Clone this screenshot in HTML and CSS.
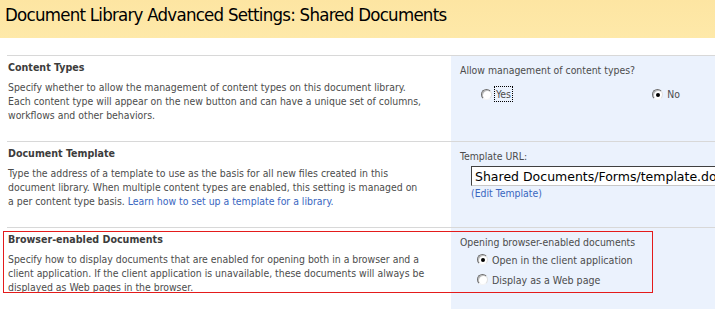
FILE: index.html
```html
<!DOCTYPE html>
<html lang="en">
<head>
    <meta charset="UTF-8">
    <title>Document Library Advanced Settings: Shared Documents</title>
    <link rel="stylesheet" href="styles.css">
</head>
<body>
    <div class="page-title">
        <h1>Document Library Advanced Settings: Shared Documents</h1>
    </div>
    <div class="settings">
        <div class="row">
            <div class="desc">
                <h3>Content Types</h3>
                <p>Specify whether to allow the management of content types on this document library. Each content type will appear on the new button and can have a unique set of columns, workflows and other behaviors.</p>
            </div>
            <div class="ctrl">
                <div class="ctrl-label">Allow management of content types?</div>
                <div class="choice-row">
                    <label class="choice"><span class="radio"></span><span class="focused">Yes</span></label>
                    <label class="choice"><span class="radio checked"></span>No</label>
                </div>
            </div>
        </div>
        <div class="row">
            <div class="desc">
                <h3>Document Template</h3>
                <p>Type the address of a template to use as the basis for all new files created in this document library. When multiple content types are enabled, this setting is managed on a per content type basis. <a href="#">Learn how to set up a template for a library.</a></p>
            </div>
            <div class="ctrl">
                <div class="ctrl-label">Template URL:</div>
                <input class="url" type="text" value="Shared Documents/Forms/template.doc">
                <a class="edit-link" href="#">(Edit Template)</a>
            </div>
        </div>
        <div class="row">
            <div class="desc">
                <h3>Browser-enabled Documents</h3>
                <p>Specify how to display documents that are enabled for opening both in a browser and a client application. If the client application is unavailable, these documents will always be displayed as Web pages in the browser.</p>
            </div>
            <div class="ctrl">
                <div class="ctrl-label">Opening browser-enabled documents</div>
                <div class="choice-list">
                    <label class="choice"><span class="radio checked"></span>Open in the client application</label>
                    <label class="choice"><span class="radio"></span>Display as a Web page</label>
                </div>
            </div>
        </div>
    </div>
    <div class="callout"></div>
</body>
</html>
```
FILE: styles.css
```css
body {
    margin: 0;
    font-family: "DejaVu Sans Condensed", "DejaVu Sans", sans-serif;
    font-stretch: condensed;
    font-size: 10.4px;
    color: #4c4c4c;
    background: #fff;
    overflow: hidden;
}
.page-title {
    height: 38px;
    background: linear-gradient(#fde5a2, #fee9a9);
}
.page-title h1 {
    margin: 0;
    padding: 3px 0 0 5px;
    font-size: 18.5px;
    letter-spacing: -0.75px;
    font-weight: normal;
    line-height: 24px;
    color: #000;
}
.settings {
    margin: 17px 0 0 7px;
}
.row {
    display: grid;
    grid-template-columns: 444px 1fr;
    height: 85px;
    border-top: 1px solid #d8d8d8;
}
.desc {
    padding: 4px 26px 0 1px;
}
.desc h3 {
    margin: 0;
    font-size: 10.6px;
    line-height: 14px;
    color: #3c3c3c;
}
.desc p {
    margin: 6px 0 0;
    line-height: 14px;
}
a {
    color: #3966bf;
    text-decoration: none;
}
.ctrl {
    background: #ebf2fd;
    padding: 7px 0 0 9px;
    line-height: 14px;
}
.choice-row {
    display: flex;
    justify-content: space-between;
    width: 199px;
    margin: 10px 0 0 21px;
}
.choice {
    display: flex;
    align-items: center;
    gap: 4px;
    height: 14px;
}
.focused {
    outline: 1px dotted #000;
    outline-offset: 0;
    padding: 0 1px;
    margin-left: -1px;
}
.radio {
    width: 9px;
    height: 9px;
    border-radius: 50%;
    background: #fff;
    border: 1px solid;
    border-color: #6d6d6d #e0e0e0 #f4f4f4 #6d6d6d;
    box-shadow: inset 1px 1px 0 #bdbdbd;
    position: relative;
}
.radio.checked::after {
    content: "";
    position: absolute;
    left: 3px;
    top: 3px;
    width: 4px;
    height: 4px;
    border-radius: 50%;
    background: #000;
}
.url {
    display: block;
    box-sizing: border-box;
    width: 260px;
    height: 20px;
    margin: 3px 0 0 11px;
    padding: 0 3px;
    border: 1px solid;
    border-color: #404040 #c8c8c8 #c8c8c8 #404040;
    font-family: "DejaVu Sans", sans-serif;
    font-size: 12.5px;
    color: #000;
    background: #fff;
}
.edit-link {
    display: inline-block;
    margin: 0 0 0 11px;
}
.choice-list {
    display: flex;
    flex-direction: column;
    gap: 5px;
    margin: 3px 0 0 17px;
}
.choice-list .choice {
    height: 15px;
    font-size: 10.6px;
}
.callout {
    position: absolute;
    left: 3px;
    top: 231px;
    width: 648px;
    height: 60px;
    border: 1px solid #e41b1b;
}
```
